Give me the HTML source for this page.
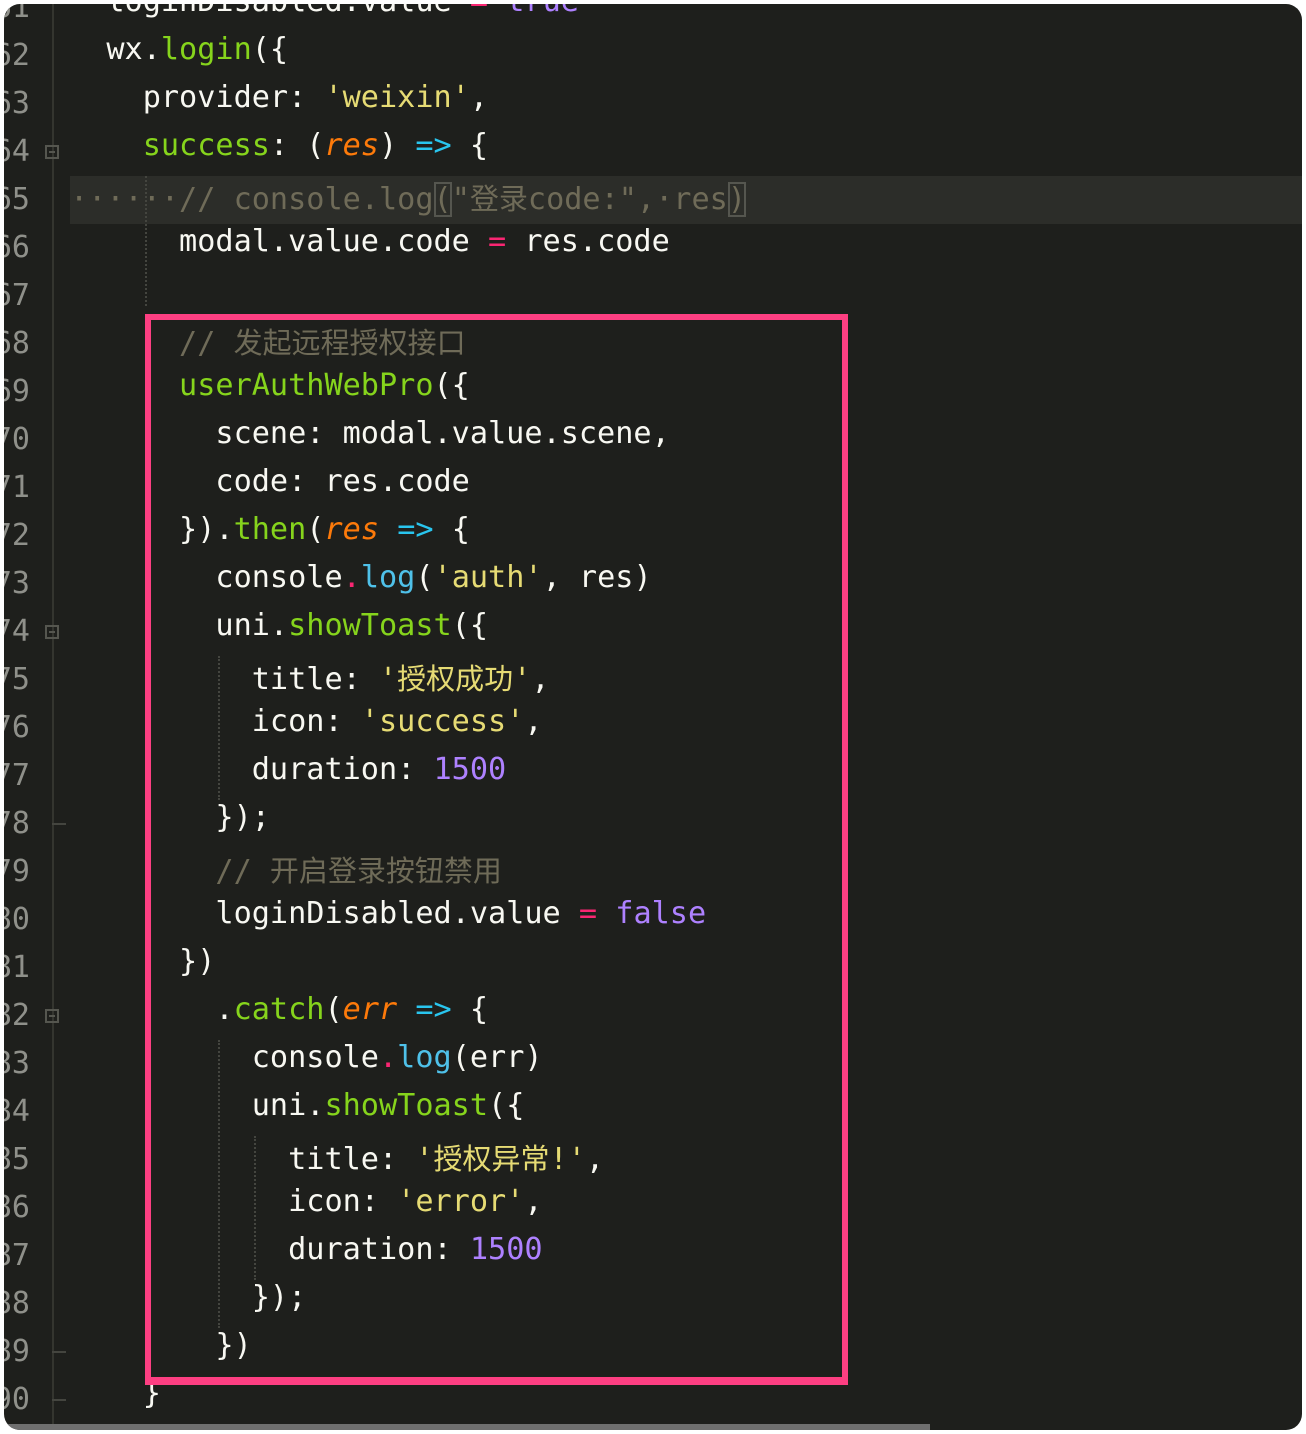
<!DOCTYPE html>
<html><head><meta charset="utf-8"><style>
body{margin:0;width:1306px;height:1434px;background:#fff;overflow:hidden}
#ed{position:absolute;left:4px;top:4px;width:1298px;height:1426px;background:#1e1f1c;border-radius:16px;overflow:hidden}
.ln{position:absolute;left:-40px;width:66px;text-align:right;color:#8f908a;font:30px "DejaVu Sans Mono","Liberation Mono",monospace;height:48px;line-height:48px}
.l{position:absolute;left:66px;height:48px;line-height:48px;white-space:pre;font:30.2px "DejaVu Sans Mono","Liberation Mono","Noto Sans CJK SC",monospace;color:#f8f8f2}
.g{color:#86d41c}.y{color:#e6db74}.p{color:#f92672}.c{color:#29c5ee}.o{color:#fd7a0a;font-style:italic}.v{color:#ae81ff}.m{color:#6f6b58}.b{color:#4fc1e9}
.cj{font-family:"Noto Sans CJK SC",sans-serif;font-size:29px}
.fold{position:absolute;left:41px;width:14px;height:14px;border:2px solid #55564f;box-sizing:border-box}
.fold:after{content:"";position:absolute;left:2px;right:2px;top:4px;height:2px;background:#55564f}
.tick{position:absolute;left:48px;width:14px;height:2px;background:#44453f}
.dg{position:absolute;width:0;border-left:2px dotted #44453f}
</style></head><body><div id="ed">
<div style="position:absolute;left:48px;top:0;width:2px;height:1426px;background:#34352f"></div>
<div style="position:absolute;left:66px;top:172px;width:1232px;height:48px;background:#2c2d29"></div>
<div class="dg" style="left:141px;top:172px;height:130px"></div>
<div class="dg" style="left:214px;top:652px;height:144px"></div>
<div class="dg" style="left:214px;top:1036px;height:288px"></div>
<div class="dg" style="left:250px;top:1132px;height:144px"></div>
<div class="fold" style="top:141px"></div>
<div class="fold" style="top:621px"></div>
<div class="fold" style="top:1005px"></div>
<div class="tick" style="top:819px"></div>
<div class="tick" style="top:1347px"></div>
<div class="tick" style="top:1395px"></div>
<div class="ln" style="top:-20px">61</div><div class="ln" style="top:28px">62</div><div class="ln" style="top:76px">63</div><div class="ln" style="top:124px">64</div><div class="ln" style="top:172px">65</div><div class="ln" style="top:220px">66</div><div class="ln" style="top:268px">67</div><div class="ln" style="top:316px">68</div><div class="ln" style="top:364px">69</div><div class="ln" style="top:412px">70</div><div class="ln" style="top:460px">71</div><div class="ln" style="top:508px">72</div><div class="ln" style="top:556px">73</div><div class="ln" style="top:604px">74</div><div class="ln" style="top:652px">75</div><div class="ln" style="top:700px">76</div><div class="ln" style="top:748px">77</div><div class="ln" style="top:796px">78</div><div class="ln" style="top:844px">79</div><div class="ln" style="top:892px">80</div><div class="ln" style="top:940px">81</div><div class="ln" style="top:988px">82</div><div class="ln" style="top:1036px">83</div><div class="ln" style="top:1084px">84</div><div class="ln" style="top:1132px">85</div><div class="ln" style="top:1180px">86</div><div class="ln" style="top:1228px">87</div><div class="ln" style="top:1276px">88</div><div class="ln" style="top:1324px">89</div><div class="ln" style="top:1372px">90</div>
<div class="l" style="top:-20px">  loginDisabled.value <span class="p">=</span> <span class="v">true</span></div>
<div class="l" style="top:28px">  wx.<span class="g">login</span>({</div>
<div class="l" style="top:76px">    provider: <span class="y">'weixin'</span>,</div>
<div class="l" style="top:124px">    <span class="g">success</span>: (<span class="o">res</span>) <span class="c">=&gt;</span> {</div>
<div class="l m" style="top:172px">······// console.log<span style="outline:2px solid #55564f;outline-offset:-2px">(</span>"<span class="cj">登录</span>code:",·res<span style="outline:2px solid #55564f;outline-offset:-2px">)</span></div>
<div class="l" style="top:220px">      modal.value.code <span class="p">=</span> res.code</div>
<div class="l m" style="top:316px">      // <span class="cj">发起远程授权接口</span></div>
<div class="l" style="top:364px">      <span class="g">userAuthWebPro</span>({</div>
<div class="l" style="top:412px">        scene: modal.value.scene,</div>
<div class="l" style="top:460px">        code: res.code</div>
<div class="l" style="top:508px">      }).<span class="g">then</span>(<span class="o">res</span> <span class="c">=&gt;</span> {</div>
<div class="l" style="top:556px">        console<span class="p">.</span><span class="b">log</span>(<span class="y">'auth'</span>, res)</div>
<div class="l" style="top:604px">        uni.<span class="g">showToast</span>({</div>
<div class="l" style="top:652px">          title: <span class="y">'<span class="cj">授权成功</span>'</span>,</div>
<div class="l" style="top:700px">          icon: <span class="y">'success'</span>,</div>
<div class="l" style="top:748px">          duration: <span class="v">1500</span></div>
<div class="l" style="top:796px">        });</div>
<div class="l m" style="top:844px">        // <span class="cj">开启登录按钮禁用</span></div>
<div class="l" style="top:892px">        loginDisabled.value <span class="p">=</span> <span class="v">false</span></div>
<div class="l" style="top:940px">      })</div>
<div class="l" style="top:988px">        .<span class="g">catch</span>(<span class="o">err</span> <span class="c">=&gt;</span> {</div>
<div class="l" style="top:1036px">          console<span class="p">.</span><span class="b">log</span>(err)</div>
<div class="l" style="top:1084px">          uni.<span class="g">showToast</span>({</div>
<div class="l" style="top:1132px">            title: <span class="y">'<span class="cj">授权异常</span>!'</span>,</div>
<div class="l" style="top:1180px">            icon: <span class="y">'error'</span>,</div>
<div class="l" style="top:1228px">            duration: <span class="v">1500</span></div>
<div class="l" style="top:1276px">          });</div>
<div class="l" style="top:1324px">        })</div>
<div class="l" style="top:1372px">    }</div>
<div style="position:absolute;left:141px;top:310px;width:703px;height:1071px;border:6px solid #fd3f82;border-bottom-width:8px;box-sizing:border-box"></div>
<div style="position:absolute;left:0;top:1420px;width:926px;height:6px;background:#6f6f6f"></div>
</div></body></html>
